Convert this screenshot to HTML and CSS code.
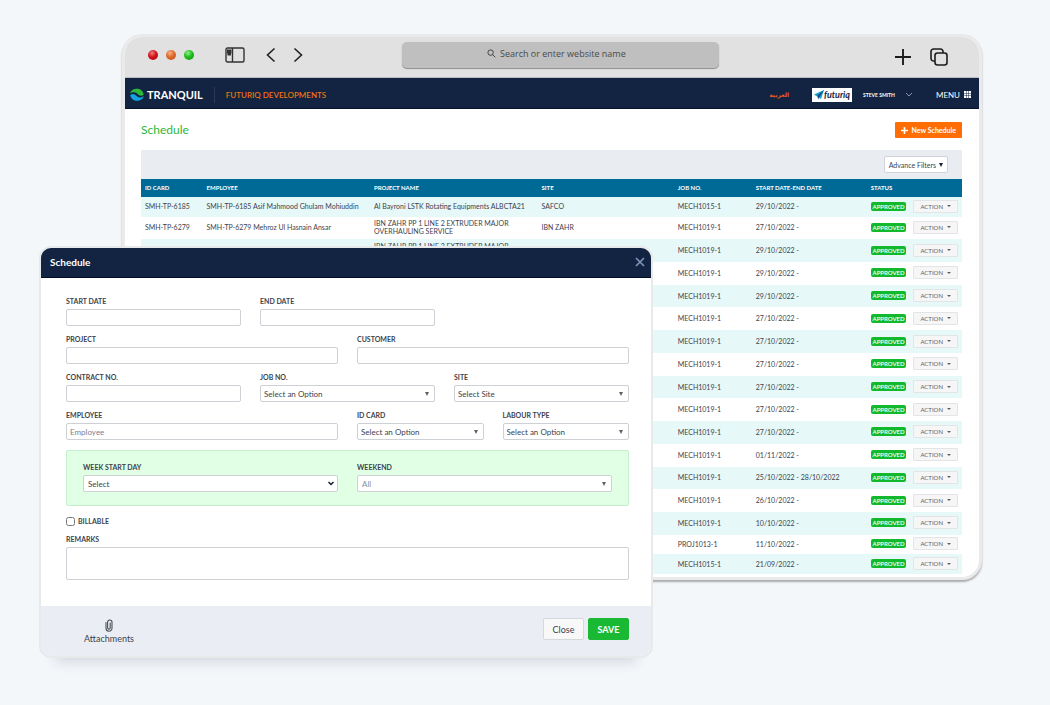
FILE: index.html
```html
<!DOCTYPE html>
<html lang="en">
<head>
<meta charset="utf-8">
<title>Schedule</title>
<link rel="stylesheet" href="styles.css">
</head>
<body>
<main class="stage">
  <section class="window" aria-label="Browser">
    <header class="chrome">
      <div class="lights"><span class="light light-red"></span><span class="light light-orange"></span><span class="light light-green"></span></div>
      <div class="chrome-left">
        <button class="icon-btn" aria-label="Sidebar"><svg width="20" height="16" viewBox="0 0 20 16" fill="none" stroke="#333" stroke-width="1.4"><rect x="1" y="1" width="18" height="14" rx="1.5"/><path d="M7.5 1v14"/><path d="M2 3.500h4.500M2 5.500h4.500M2.500 7.500h3.500" stroke-width="1.900"/></svg></button>
        <button class="icon-btn icon-back" aria-label="Back"><svg width="10" height="16" viewBox="0 0 10 16" fill="none" stroke="#222" stroke-width="1.6"><path d="M8.500 1.500L1.500 8l7 6.500"/></svg></button>
        <button class="icon-btn icon-next" aria-label="Forward"><svg width="10" height="16" viewBox="0 0 10 16" fill="none" stroke="#222" stroke-width="1.6"><path d="M1.500 1.500L8.500 8l-7 6.500"/></svg></button>
      </div>
      <label class="address">
        <svg width="9" height="9" viewBox="0 0 9 9" fill="none" stroke="#444" stroke-width="1"><circle cx="3.600" cy="3.600" r="2.700"/><path d="M5.600 5.600L8.300 8.300"/></svg>
        <input class="address-input" type="text" placeholder="Search or enter website name" aria-label="Search or enter website name">
      </label>
      <div class="chrome-right">
        <button class="icon-btn" aria-label="New tab"><svg width="16" height="18" viewBox="0 0 16 18" stroke="#1c1c1c" stroke-width="1.900"><path d="M8 1v16M0 9h16"/></svg></button>
        <button class="icon-btn" aria-label="Tabs"><svg width="18" height="18" viewBox="0 0 18 18" fill="none" stroke="#1c1c1c" stroke-width="1.600"><rect x="5" y="5" width="12" height="12" rx="2.500"/><path d="M5 13H3.500A2.500 2.500 0 0 1 1 10.500v-7A2.500 2.500 0 0 1 3.500 1h7A2.500 2.500 0 0 1 13 3.500V5"/></svg></button>
      </div>
    </header>
    <nav class="nav">
      <a class="brand" href="#">
        <svg width="14" height="14" viewBox="0 0 14 14"><path fill="#2db83a" d="M0 5.500C1 2 4 .8 7 .8s6 2 6.800 5.700c-1.500 1.500-3.500 1.800-5 .6C7 5.500 6 4.200 3.800 4.300 2 4.300.8 4.800 0 5.500z"/><path fill="#12a5e2" d="M14 7.800c-1 3.600-4 5-7 5S1 10.800.2 7.200c1.500-1.500 3.300-1.700 4.800-.5C7 8.300 8 9.600 10.200 9.500c1.800 0 3-.8 3.800-1.700z"/></svg>
        <span>TRANQUIL</span>
      </a>
      <span class="company">FUTURIQ DEVELOPMENTS</span>
      <a class="arabic" href="#" lang="ar">العربية</a>
      <a class="client" href="#"><svg width="10" height="10" viewBox="0 0 10 10"><path fill="#17a3c4" d="M0 4.500L10 0 7 9z"/><path fill="#1c4f8c" d="M10 0L3.500 5.200 4 9.500 5.500 7z"/></svg><span>futuriq</span></a>
      <span class="user">STEVE SMITH</span>
      <svg class="chev" width="8" height="5" viewBox="0 0 8 5" fill="none" stroke="#8a96ae" stroke-width="1"><path d="M1 1l3 3 3-3"/></svg>
      <button class="menu">MENU <svg width="7" height="7" viewBox="0 0 7 7" fill="#fff"><path d="M0 0h2v2H0zM2.500 0h2v2h-2zM5 0h2v2H5zM0 2.500h2v2H0zM2.500 2.500h2v2h-2zM5 2.500h2v2H5zM0 5h2v2H0zM2.500 5h2v2h-2zM5 5h2v2H5z"/></svg></button>
    </nav>
    <div class="page">
      <div class="page-head">
        <h1 class="page-title">Schedule</h1>
        <button class="new-btn"><svg width="7" height="7" viewBox="0 0 7 7" stroke="#fff" stroke-width="1.600"><path d="M3.500 0v7M0 3.500h7"/></svg>New Schedule</button>
      </div>
      <div class="filters"><button class="filter-btn">Advance Filters <span class="tri"></span></button></div>
      <table class="grid">
        <colgroup><col class="c-id"><col class="c-emp"><col class="c-proj"><col class="c-site"><col class="c-job"><col class="c-date"><col class="c-status"></colgroup>
        <thead><tr><th>ID CARD</th><th>EMPLOYEE</th><th>PROJECT NAME</th><th>SITE</th><th>JOB NO.</th><th>START DATE-END DATE</th><th>STATUS</th></tr></thead>
        <tbody id="rows"></tbody>
      </table>
    </div>
  </section>

  <section class="dialog" role="dialog" aria-labelledby="dlg-title">
    <header class="dialog-head">
      <h2 class="dialog-title" id="dlg-title">Schedule</h2>
      <button class="close-x" aria-label="Close dialog"><svg width="10" height="10" viewBox="0 0 10 10" stroke="#7f93b8" stroke-width="1.700"><path d="M1 1l8 8M9 1L1 9"/></svg></button>
    </header>
    <form class="form">
      <div class="fields">
        <div class="field span-4"><label for="start">START DATE</label><input class="control" id="start" type="text"></div>
        <div class="field span-4"><label for="end">END DATE</label><input class="control" id="end" type="text"></div>
        <div class="field span-6 new-row"><label for="project">PROJECT</label><input class="control" id="project" type="text"></div>
        <div class="field span-6"><label for="customer">CUSTOMER</label><input class="control" id="customer" type="text"></div>
        <div class="field span-4"><label for="contract">CONTRACT NO.</label><input class="control" id="contract" type="text"></div>
        <div class="field span-4"><label for="job">JOB NO.</label><div class="pick"><select class="control" id="job"><option>Select an Option</option></select></div></div>
        <div class="field span-4"><label for="site">SITE</label><div class="pick"><select class="control" id="site"><option>Select Site</option></select></div></div>
        <div class="field span-6"><label for="employee">EMPLOYEE</label><input class="control" id="employee" type="text" placeholder="Employee"></div>
        <div class="field span-3"><label for="card">ID CARD</label><div class="pick"><select class="control" id="card"><option>Select an Option</option></select></div></div>
        <div class="field span-3"><label for="labour">LABOUR TYPE</label><div class="pick"><select class="control" id="labour"><option>Select an Option</option></select></div></div>
      </div>
      <div class="week">
        <div class="field"><label for="weekstart">WEEK START DAY</label><div class="pick pick-chevron"><select class="control" id="weekstart"><option>Select</option></select><svg width="6" height="5" viewBox="0 0 6 5" fill="none" stroke="#111c33" stroke-width="1.500"><path d="M.5 1L3 3.500 5.500 1"/></svg></div></div>
        <div class="field"><label for="weekend">WEEKEND</label><div class="pick"><select class="control muted" id="weekend"><option>All</option></select></div></div>
      </div>
      <div class="check"><input type="checkbox" id="billable"><label for="billable">BILLABLE</label></div>
      <div class="field"><label for="remarks">REMARKS</label><textarea class="control area" id="remarks"></textarea></div>
    </form>
    <footer class="dialog-foot">
      <button class="attach"><svg width="8" height="13" viewBox="0 0 8 13" fill="none" stroke="#4a4f58" stroke-width="1.100" stroke-linecap="round"><path d="M1 3.500v5.700a3 3 0 0 0 6 0V3.200a2.200 2.200 0 0 0-4.400 0v5.600a1.300 1.300 0 0 0 2.600 0V4"/></svg>Attachments</button>
      <div class="actions"><button class="btn btn-close">Close</button><button class="btn btn-save">SAVE</button></div>
    </footer>
  </section>
</main>
<script src="rows.js"></script>
</body>
</html>
```
FILE: styles.css
```css
* { box-sizing: border-box; }
body { margin: 0; background: #f4f7fa; font-family: Lato, "Liberation Sans", sans-serif; color: #3d434d; }
button, input, select, textarea { font-family: inherit; color: inherit; margin: 0; }
button { border: 0; background: none; padding: 0; }
a { color: inherit; text-decoration: none; }
svg { display: block; flex: none; }
h1, h2 { margin: 0; font-weight: 400; }

.stage { position: relative; min-height: 100vh; padding: 34px 68px 48px 122px; }

.window { border: 3px solid #eaeaea; border-radius: 20px; background: #fff; overflow: hidden; box-shadow: 0 2px 2px #a9abad; }
.chrome { display: flex; align-items: center; height: 41px; padding: 0 31px 4px 23px; background: #e1e1e1; border-bottom: 1px solid #b9bcc0; }
.lights { display: flex; gap: 8px; }
.light { width: 10px; height: 10px; border-radius: 50%; }
.light-red { background: radial-gradient(circle at 40% 30%, #f08080, #d0121b 45%, #a80c12); }
.light-orange { background: radial-gradient(circle at 40% 30%, #f6b48c, #e0692a 45%, #b9501a); }
.light-green { background: radial-gradient(circle at 40% 30%, #8ff08a, #1fbd1b 45%, #128f10); }
.chrome-left { display: flex; align-items: center; margin-left: 31px; }
.icon-back { margin-left: 21px; }
.icon-next { margin-left: 17px; }
.address { display: flex; flex: 0 1 317px; align-items: center; justify-content: center; gap: 4px; height: 26px; padding: 0 6px 3px 0; margin: 0 auto 0 99px; border-radius: 5px; background: #bfbfbf; box-shadow: 0 1px 1px #8d8d8d; }
.address-input { width: 128px; border: 0; padding: 0; background: none; font: 9px/12px "Open Sans", sans-serif; outline: 0; }
.address-input::placeholder { color: #4a4a4a; opacity: 1; }
.chrome-right { display: flex; align-items: center; gap: 19px; padding-top: 3px; }

.nav { display: flex; align-items: center; height: 31px; padding: 3px 8px 0 5px; background: #122442; border-bottom: 1px solid #06122b; color: #fff; }
.brand { display: flex; align-items: center; gap: 3px; font-size: 11px; line-height: 14px; font-weight: 700; }
.company { margin-left: 11px; padding-left: 11px; border-left: 1px solid #2a3a56; color: #ee720e; font-size: 8px; font-weight: 600; line-height: 16px; }
.arabic { margin-left: auto; color: #e0602a; font: 700 6px "DejaVu Sans", sans-serif; }
.client { display: flex; align-items: center; justify-content: center; width: 40px; height: 14px; margin-left: 23px; background: #fff; color: #122442; font-size: 9px; font-weight: 700; font-style: italic; }
.user { margin-left: 11px; font-size: 5px; font-weight: 700; }
.chev { margin-left: 10px; }
.menu { display: flex; align-items: center; gap: 4px; margin-left: 23px; font-size: 8px; }

.page { padding: 13px 17px 3px 16px; }
.page-head { display: flex; align-items: center; justify-content: space-between; margin-bottom: 12px; }
.page-title { color: #2db83a; font-size: 12px; line-height: 16px; }
.new-btn { display: flex; align-items: center; gap: 4px; height: 16px; padding: 0 6px; background: #ff6d05; color: #fff; font-size: 7px; font-weight: 700; border-radius: 1px; }
.filters { display: flex; align-items: center; justify-content: flex-end; height: 29px; padding: 0 14px 0 0; background: #e9edf2; }
.filter-btn { display: flex; align-items: center; gap: 3px; height: 17px; padding: 0 4px; border: 1px solid #d0d4da; border-radius: 2px; background: #fff; font-size: 7px; }
.tri { border: 2px solid transparent; border-top: 4px solid #18223a; border-bottom: 0; }

.grid { width: 100%; height: 395px; border-collapse: collapse; table-layout: fixed; font-size: 7px; line-height: 8px; }
.grid th, .grid td { padding: 0 4px 1px; text-align: left; vertical-align: middle; }
.grid thead tr { height: 18px; background: #006a97; color: #fff; }
.grid th { font-size: 6px; }
.grid tbody tr:nth-child(odd) { background: #e6f8f8; }
.row { height: 22px; }
.row-short { height: 19px; }
.c-id { width: 7.5%; } .c-emp { width: 20.4%; } .c-proj { width: 20.4%; } .c-site { width: 16.6%; } .c-job { width: 9.5%; } .c-date { width: 14%; } .c-status { width: 11.6%; }
.state { display: flex; align-items: center; gap: 7px; }
.badge { width: 36px; height: 9px; border-radius: 2px; background: #12b92c; color: #fff; font-size: 6px; font-weight: 600; line-height: 9px; text-align: center; }
.action { display: flex; align-items: center; justify-content: center; gap: 4px; width: 45px; height: 13px; border: 1px solid #e2e4e6; border-radius: 1px; background: #f6f6f6; font-size: 6px; color: #5c6068; }
.action::after { content: ""; border: 2px solid transparent; border-top-color: #5c6068; border-bottom: 0; }

.dialog { position: absolute; top: 246px; left: 39px; right: 397px; border: 2px solid #e8e9eb; border-radius: 12px; background: #fff; background-clip: padding-box; box-shadow: 0 20px 12px -16px #d3d8df; }
.dialog-head { display: flex; align-items: center; justify-content: space-between; height: 30px; padding: 0 6px 1px 9px; border-bottom: 1px solid #030f28; border-radius: 10px 10px 0 0; background: #122442; color: #fff; }
.dialog-title { font-size: 10px; font-weight: 700; }
.form { padding: 18px 22px 26px 25px; }
.fields { display: grid; grid-template-columns: repeat(12, 1fr); column-gap: 19px; row-gap: 8px; }
.span-3 { grid-column: span 3; }
.span-4 { grid-column: span 4; }
.span-6 { grid-column: span 6; }
.new-row { grid-column: 1 / span 6; }
.field { display: flex; flex-direction: column; gap: 3px; min-width: 0; }
label { font-size: 7px; line-height: 10px; font-weight: 700; }
.control { display: block; width: 100%; height: 17px; padding: 0 3px; border: 1px solid #cdd1d5; border-radius: 2px; background: #fff; font-size: 8px; outline: 0; appearance: none; }
.control::placeholder { color: #7b818b; }
.pick { position: relative; }
.pick::after { content: ""; position: absolute; right: 6px; top: 7px; border: 2px solid transparent; border-top: 4px solid #5d6169; border-bottom: 0; pointer-events: none; }
.pick-chevron::after { display: none; }
.pick-chevron svg { position: absolute; right: 4px; top: 6px; }
.week { display: grid; grid-template-columns: 1fr 1fr; column-gap: 19px; margin: 10px 0; padding: 11px 16px 13px; border: 1px solid #c6f0cb; border-radius: 2px; background: #e1ffe5; }
.week .control { padding: 0 4px; }
.muted { color: #8b9097; }
.check { display: flex; align-items: center; gap: 3px; margin-bottom: 8px; }
.check input { width: 9px; height: 9px; margin: 0; }
.area { height: 33px; resize: none; }
.dialog-foot { display: flex; align-items: center; justify-content: space-between; height: 50px; padding: 0 22px 4px 43px; border-radius: 0 0 10px 10px; background: #eaeef4; }
.attach { display: flex; flex-direction: column; align-items: center; gap: 2px; padding-top: 4px; font-size: 9px; line-height: 10px; }
.actions { display: flex; gap: 4px; }
.btn { width: 41px; height: 22px; border: 1px solid #d5d8dc; border-radius: 2px; font-size: 9px; }
.btn-close { background: #f8f8f8; }
.btn-save { border-color: #19b934; background: #19b934; color: #fff; font-weight: 700; }
```
FILE: rows.js
```js
const extruder = 'IBN ZAHR PP 1 LINE 2 EXTRUDER MAJOR OVERHAULING SERVICE';
const dates = ['29/10/2022 -', '27/10/2022 -', '29/10/2022 -', '29/10/2022 -', '29/10/2022 -', '27/10/2022 -', '27/10/2022 -', '27/10/2022 -', '27/10/2022 -', '27/10/2022 -', '27/10/2022 -', '01/11/2022 -', '25/10/2022 - 28/10/2022', '26/10/2022 -', '10/10/2022 -', '11/10/2022 -', '21/09/2022 -'];
const jobs = { 0: 'MECH1015-1', 15: 'PROJ1013-1', 16: 'MECH1015-1' };
const people = [
  ['SMH-TP-6185', 'SMH-TP-6185 Asif Mahmood Ghulam Mohiuddin', 'Al Bayroni LSTK Rotating Equipments ALBCTA21', 'SAFCO'],
  ['SMH-TP-6279', 'SMH-TP-6279 Mehroz Ul Hasnain Ansar', extruder, 'IBN ZAHR'],
  ['', '', extruder, '']
];
document.getElementById('rows').innerHTML = dates.map((date, i) => {
  const cells = (people[i] || ['', '', '', '']).concat(jobs[i] || 'MECH1019-1', date);
  const size = jobs[i] ? 'row-short' : 'row';
  return `<tr class="${size}">${cells.map(c => `<td>${c}</td>`).join('')}<td><div class="state"><span class="badge">APPROVED</span><button class="action">ACTION</button></div></td></tr>`;
}).join('');
```
